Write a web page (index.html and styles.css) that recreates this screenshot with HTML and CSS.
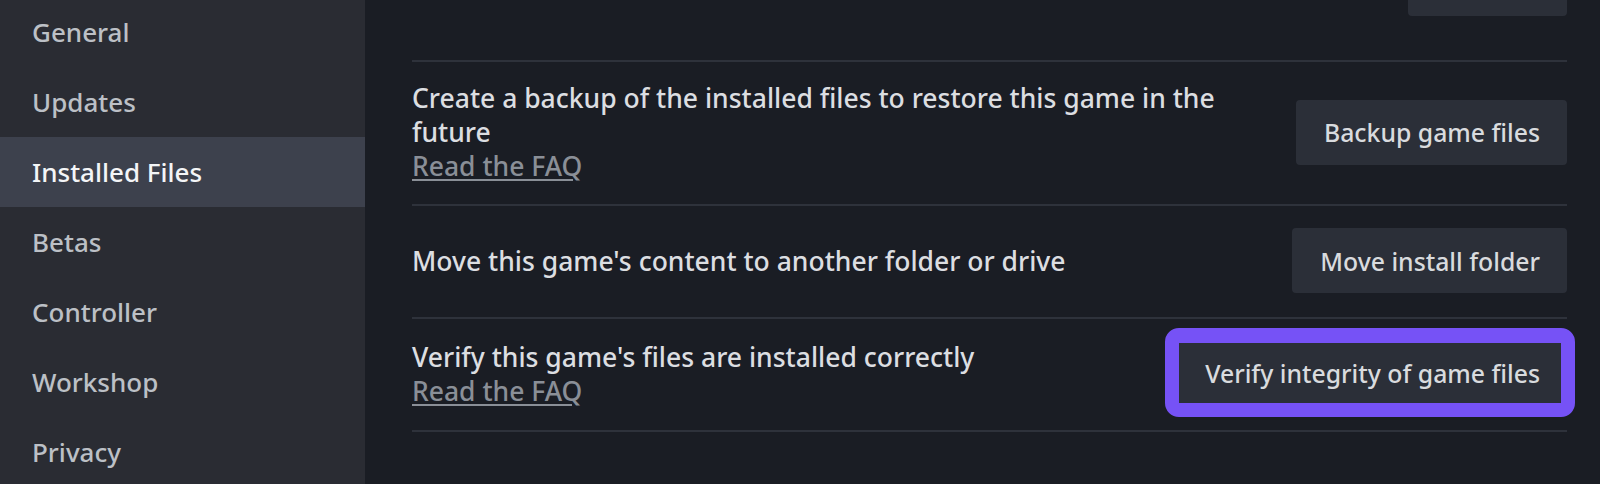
FILE: index.html
```html
<!DOCTYPE html>
<html lang="en">
<head>
<meta charset="utf-8">
<title>Properties - Installed Files</title>
<link rel="stylesheet" href="styles.css">
</head>
<body>
<div class="app">
  <nav class="sidebar">
    <ul class="nav-list">
      <li class="nav-item">General</li>
      <li class="nav-item">Updates</li>
      <li class="nav-item active">Installed Files</li>
      <li class="nav-item">Betas</li>
      <li class="nav-item">Controller</li>
      <li class="nav-item">Workshop</li>
      <li class="nav-item">Privacy</li>
    </ul>
  </nav>
  <main class="content">
    <div class="row row-partial">
      <div class="row-text"></div>
      <div class="btn btn-partial" aria-hidden="true"></div>
    </div>
    <div class="row">
      <div class="row-text">
        <div class="desc">Create a backup of the installed files to restore this game in the future</div>
        <a class="faq" href="#">Read the FAQ</a>
      </div>
      <button class="btn">Backup game files</button>
    </div>
    <div class="row">
      <div class="row-text">
        <div class="desc">Move this game's content to another folder or drive</div>
      </div>
      <button class="btn">Move install folder</button>
    </div>
    <div class="row">
      <div class="row-text">
        <div class="desc">Verify this game's files are installed correctly</div>
        <a class="faq" href="#">Read the FAQ</a>
      </div>
      <button class="btn btn-focus">Verify integrity of game files</button>
    </div>
  </main>
</div>
</body>
</html>
```
FILE: styles.css
```css
* {
  box-sizing: border-box;
}

html, body {
  margin: 0;
  padding: 0;
  height: 100%;
  background: #1a1d24;
}

body {
  font-family: "Noto Sans", "Open Sans", "Liberation Sans", sans-serif;
  overflow: hidden;
}

.app {
  display: flex;
  height: 484px;
  overflow: hidden;
}

.sidebar {
  width: 365px;
  flex: 0 0 365px;
  background: #2a2c33;
  height: 100%;
}

.nav-list {
  list-style: none;
  margin: -3px 0 0 0;
  padding: 0;
}

.nav-item {
  height: 70px;
  display: flex;
  align-items: center;
  padding-left: 32px;
  font-size: 26px;
  font-weight: 500;
  color: #bcc0c6;
}

.nav-item.active {
  background: #3d414d;
  color: #f4f5f7;
}

.content {
  flex: 1;
  padding: 0 33px 0 47px;
  margin-top: -92px;
}

.row {
  display: flex;
  align-items: center;
  justify-content: space-between;
  gap: 60px;
  padding: 21px 0;
  min-height: 113px;
  border-bottom: 2px solid #2e323b;
}

.row-partial {
  height: 154px;
}

.row-partial .row-text {
  height: 110px;
}

.row-text {
  flex: 1;
  min-width: 0;
  margin-top: -2px;
}

.desc {
  font-size: 26.5px;
  line-height: 34px;
  font-weight: 500;
  color: #dcdee1;
}

.faq {
  display: inline-block;
  font-size: 26.5px;
  line-height: 34px;
  font-weight: 500;
  color: #8a8f97;
  text-decoration: underline;
  text-underline-offset: 3px;
}

.btn {
  flex: 0 0 auto;
  height: 65px;
  margin-top: -2px;
  padding: 0 27px 0 28px;
  border: none;
  border-radius: 4px;
  background: #2b2f38;
  color: #d9dbde;
  font-family: inherit;
  font-size: 24.8px;
  font-weight: 500;
}

.btn-partial {
  width: 159px;
}

.btn-focus {
  height: 89px;
  margin: -14px -8px -10px 0;
  padding: 0 21px 0 26px;
  border: 14px solid #7652f6;
  border-top-width: 15px;
  border-radius: 14px;
}
```
